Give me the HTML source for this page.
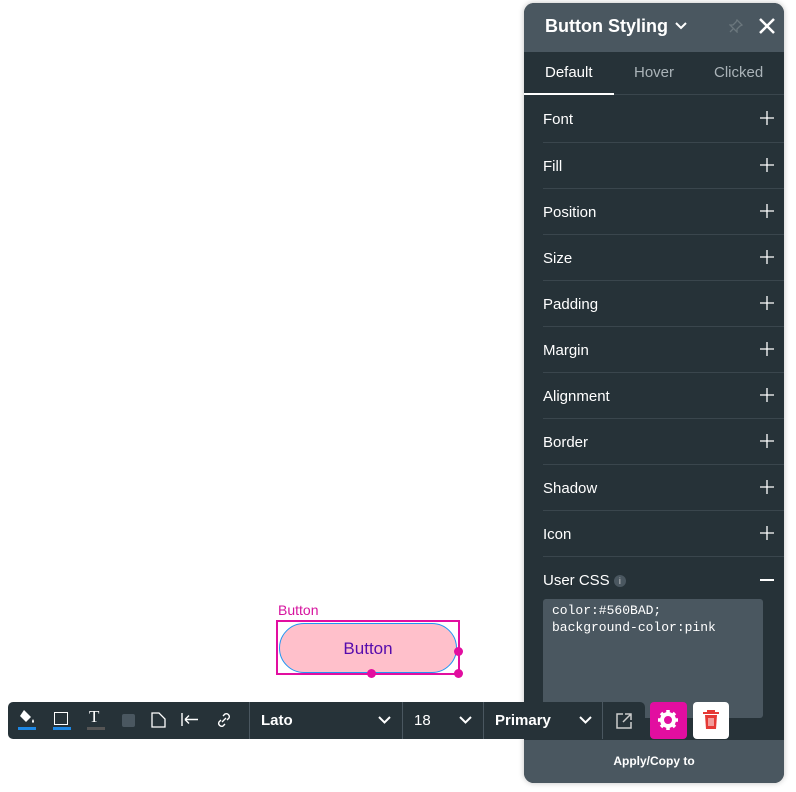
<!DOCTYPE html><html><head><style>
body{margin:0;width:796px;height:792px;background:#fff;position:relative;overflow:hidden;font-family:"Liberation Sans",sans-serif}
.p{position:absolute;left:524px;top:3px;width:260px;height:780px;background:#263238;border-radius:10px;overflow:hidden;box-shadow:0 0 6px rgba(0,0,0,.25)}
.hd{height:49px;background:#4a5760;color:#fff;font-weight:bold;font-size:18px;line-height:46px;padding-left:21px;position:relative}
.tabs{height:43px;position:relative;color:#aab3b8;font-size:15px}
.tabs span{position:absolute;top:12px}
.row{position:absolute;left:19px;right:0;height:46px;border-top:1px solid #3a464d;color:#fff;font-size:15px;line-height:48px}
.row svg{position:absolute;right:10px;top:15px}
.tb{position:absolute;left:8px;top:702px;width:637px;height:37px;background:#263238;border-radius:5px;color:#fff}
.sep{position:absolute;top:0;width:1px;height:37px;background:#4a5760}
.t{position:absolute;top:10px;font-size:15px;font-weight:bold}
.ch{position:absolute;top:14px}
</style></head><body>
<div style="position:absolute;left:278px;top:602px;color:#d6139e;font-size:14px">Button</div>
<div style="position:absolute;left:276px;top:620px;width:180px;height:51px;border:2px solid #e20ea0"></div>
<div style="position:absolute;left:279px;top:623px;border:1px solid #2196f3;border-radius:25px;background:#ffc0cb;color:#560bad;font-size:17px;text-align:center;line-height:50px;box-sizing:border-box;width:178px;height:50px">Button</div>
<div style="position:absolute;left:454px;top:647px;width:9px;height:9px;border-radius:50%;background:#e20ea0"></div>
<div style="position:absolute;left:454px;top:669px;width:9px;height:9px;border-radius:50%;background:#e20ea0"></div>
<div style="position:absolute;left:367px;top:669px;width:9px;height:9px;border-radius:50%;background:#e20ea0"></div>
<div class="p">
<div class="hd">Button Styling <svg width="12" height="8" style="margin-left:2px;vertical-align:2px"><path d="M1 1l5 5 5-5" stroke="#fff" stroke-width="2" fill="none"/></svg>
<svg width="18" height="18" style="position:absolute;right:8px;top:14px"><path d="M2 2L16 16M16 2L2 16" stroke="#fff" stroke-width="2.5"/></svg>
<svg width="14" height="14" style="position:absolute;right:41px;top:16px"><path d="M8 1l5 5-2 1-3 3v3L1 6h3l3-3z M4 10l-3 3" stroke="#6b777d" stroke-width="1.3" fill="none"/></svg></div>
<div class="tabs"><span style="left:21px;color:#fff">Default</span><span style="left:110px">Hover</span><span style="left:190px">Clicked</span>
<div style="position:absolute;left:0;bottom:0;width:90px;height:2px;background:#fff"></div><div style="position:absolute;left:90px;right:0;bottom:0;height:1px;background:#3a464d"></div></div>
<div class="row" style="top:93px;border:0">Font<svg width="14" height="14"><path d="M7 0v14M0 7h14" stroke="#fff" stroke-width="1.3"/></svg></div>
<div class="row" style="top:139px">Fill<svg width="14" height="14"><path d="M7 0v14M0 7h14" stroke="#fff" stroke-width="1.3"/></svg></div>
<div class="row" style="top:185px">Position<svg width="14" height="14"><path d="M7 0v14M0 7h14" stroke="#fff" stroke-width="1.3"/></svg></div>
<div class="row" style="top:231px">Size<svg width="14" height="14"><path d="M7 0v14M0 7h14" stroke="#fff" stroke-width="1.3"/></svg></div>
<div class="row" style="top:277px">Padding<svg width="14" height="14"><path d="M7 0v14M0 7h14" stroke="#fff" stroke-width="1.3"/></svg></div>
<div class="row" style="top:323px">Margin<svg width="14" height="14"><path d="M7 0v14M0 7h14" stroke="#fff" stroke-width="1.3"/></svg></div>
<div class="row" style="top:369px">Alignment<svg width="14" height="14"><path d="M7 0v14M0 7h14" stroke="#fff" stroke-width="1.3"/></svg></div>
<div class="row" style="top:415px">Border<svg width="14" height="14"><path d="M7 0v14M0 7h14" stroke="#fff" stroke-width="1.3"/></svg></div>
<div class="row" style="top:461px">Shadow<svg width="14" height="14"><path d="M7 0v14M0 7h14" stroke="#fff" stroke-width="1.3"/></svg></div>
<div class="row" style="top:507px">Icon<svg width="14" height="14"><path d="M7 0v14M0 7h14" stroke="#fff" stroke-width="1.3"/></svg></div>
<div class="row" style="top:553px">User CSS <span style="display:inline-block;width:12px;height:12px;border-radius:50%;background:#4a5760;font-size:9px;line-height:12px;text-align:center;vertical-align:1px;color:#ccc">i</span><svg width="14" height="14" style="top:16px"><path d="M0 7h14" stroke="#fff" stroke-width="2"/></svg></div>
<div style="position:absolute;left:19px;top:596px;width:220px;height:119px;background:#4a5760;border-radius:3px;color:#fff;font-family:'Liberation Mono',monospace;font-size:13px;line-height:17px;padding:3px 9px;box-sizing:border-box">color:#560BAD;<br>background-color:pink</div>
<div style="position:absolute;left:0;right:0;bottom:0;height:43px;background:#4a5760;color:#fff;font-size:12px;font-weight:bold;text-align:center;line-height:42px">Apply/Copy to</div>
</div>
<div class="tb">
<svg width="20" height="16" style="position:absolute;left:9px;top:7px"><path d="M7 1l7 7-5 5-6-6z" fill="#fff"/><path d="M16 10q2 3 0 4q-2-1 0-4z" fill="#fff"/></svg><div style="position:absolute;left:10px;top:25px;width:18px;height:3px;background:#1e88e5"></div>
<div style="position:absolute;left:46px;top:10px;width:12px;height:11px;border:1px solid #fff"></div><div style="position:absolute;left:45px;top:25px;width:18px;height:3px;background:#1e88e5"></div>
<div style="position:absolute;left:81px;top:5px;font-size:17px;font-family:'Liberation Serif',serif">T</div><div style="position:absolute;left:79px;top:25px;width:18px;height:3px;background:#555"></div>
<div style="position:absolute;left:114px;top:12px;width:13px;height:13px;background:#4a5760;border-radius:2px"></div>
<svg width="16" height="16" style="position:absolute;left:143px;top:10px"><path d="M1 1h7l6 6v8H1z" stroke="#fff" stroke-width="1.3" fill="none"/></svg>
<svg width="18" height="14" style="position:absolute;left:173px;top:11px"><path d="M1 0v13M4 6.5h13M4 6.5l4-4M4 6.5l4 4" stroke="#fff" stroke-width="1.4" fill="none"/></svg>
<svg width="18" height="18" style="position:absolute;left:207px;top:9px"><path d="M7 11l4-4M8 5l2-2a3 3 0 0 1 4 4l-2 2M10 13l-2 2a3 3 0 0 1-4-4l2-2" stroke="#fff" stroke-width="1.4" fill="none"/></svg>
<div class="sep" style="left:241px"></div><span class="t" style="left:253px">Lato</span><svg class="ch" width="13" height="9" style="left:370px"><path d="M1 1l5.5 5.5L12 1" stroke="#fff" stroke-width="2" fill="none"/></svg>
<div class="sep" style="left:394px"></div><span class="t" style="left:406px;font-weight:normal">18</span><svg class="ch" width="13" height="9" style="left:451px"><path d="M1 1l5.5 5.5L12 1" stroke="#fff" stroke-width="2" fill="none"/></svg>
<div class="sep" style="left:475px"></div><span class="t" style="left:487px">Primary</span><svg class="ch" width="13" height="9" style="left:571px"><path d="M1 1l5.5 5.5L12 1" stroke="#fff" stroke-width="2" fill="none"/></svg>
<div class="sep" style="left:594px"></div><svg width="18" height="18" style="position:absolute;left:607px;top:10px"><path d="M8 2H2v14h14v-6M10 2h6v6M16 2l-8 8" stroke="#ccc" stroke-width="1.5" fill="none"/></svg>
</div>
<div style="position:absolute;left:650px;top:702px;width:37px;height:37px;background:#e20ea0;border-radius:4px"><svg width="20" height="20" style="position:absolute;left:8px;top:8px" viewBox="0 0 20 20"><circle cx="10" cy="10" r="6" fill="none" stroke="#fff" stroke-width="4"/><path d="M10 0v5M10 15v5M0 10h5M15 10h5M3 3l3.5 3.5M13.5 13.5L17 17M17 3l-3.5 3.5M6.5 13.5L3 17" stroke="#fff" stroke-width="3.5"/><circle cx="10" cy="10" r="2.5" fill="#e20ea0"/></svg></div>
<div style="position:absolute;left:693px;top:702px;width:36px;height:37px;background:#fff;border-radius:4px;"><svg width="16" height="20" style="position:absolute;left:10px;top:8px"><path d="M0 3h16M5 3V1h6v2" stroke="#e53935" stroke-width="2" fill="none"/><path d="M2 5h12l-1 14H3z" fill="#e53935"/><path d="M6 8v8M8 8v8M10 8v8" stroke="#fff" stroke-width="1"/></svg></div>
</body></html>
